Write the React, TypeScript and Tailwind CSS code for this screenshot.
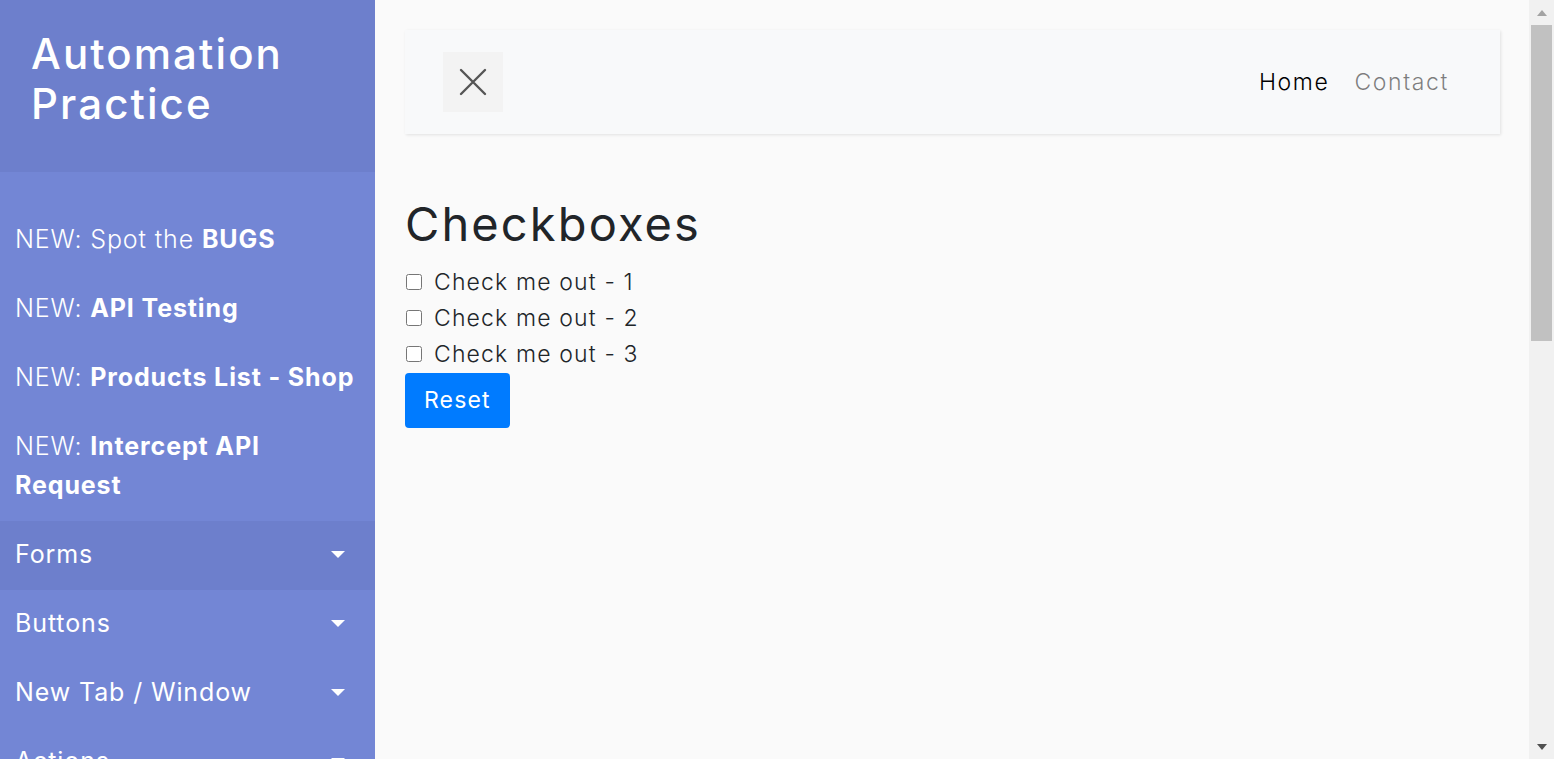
import React, { useState } from 'react';

const font = { fontFamily: 'Inter, "Noto Sans", sans-serif' };

interface NavItem {
  prefix?: string;
  label: string;
  bold?: boolean;
  dropdown?: boolean;
  active?: boolean;
}

const navItems: NavItem[] = [
  { prefix: 'NEW: Spot the ', label: 'BUGS', bold: true },
  { prefix: 'NEW: ', label: 'API Testing', bold: true },
  { prefix: 'NEW: ', label: 'Products List - Shop', bold: true },
  { prefix: 'NEW: ', label: 'Intercept API Request', bold: true },
  { label: 'Forms', dropdown: true, active: true },
  { label: 'Buttons', dropdown: true },
  { label: 'New Tab / Window', dropdown: true },
  { label: 'Actions', dropdown: true },
  { label: 'Alerts & Modals', dropdown: true },
  { label: 'Tables', dropdown: true },
  { label: 'Iframes', dropdown: true },
  { label: 'Others', dropdown: true },
];

function Sidebar() {
  return (
    <nav className="w-[375px] shrink-0 bg-[#7386d5] text-white">
      <div className="bg-[#6d7fcc] pl-[31px] pr-5 pt-[29px] pb-[43px]">
        <h3 className="text-[42px] leading-[50px] font-medium tracking-[0.05em]">Automation Practice</h3>
      </div>
      <ul className="pt-[34px] pb-5">
        {navItems.map((item) => (
          <li key={item.label}>
            <a
              href="#"
              className={`flex items-center justify-between pl-[15px] pt-[14px] pb-[16px] text-[25px] leading-[39px] tracking-[0.035em] ${
                item.dropdown ? 'pr-[30px]' : 'pr-[8px]'
              } ${item.active ? 'bg-[#6d7fcc]' : ''}`}
            >
              <span>
                {item.prefix && <span className="font-light">{item.prefix}</span>}
                <span className={item.bold ? 'font-bold' : 'font-normal'}>{item.label}</span>
              </span>
              {item.dropdown && (
                <span className="w-0 h-0 border-t-[7px] border-t-white border-x-[7px] border-x-transparent shrink-0" />
              )}
            </a>
          </li>
        ))}
      </ul>
    </nav>
  );
}

function Navbar() {
  return (
    <div className="flex items-center justify-between bg-[#f8f9fa] h-[104px] pl-[38px] pr-[51px] shadow-[1px_1px_3px_rgba(0,0,0,0.1)]">
      <button className="w-[60px] h-[60px] bg-[#f3f3f3] flex items-center justify-center">
        <svg width="28" height="28" viewBox="0 0 28 28" fill="none" stroke="#555" strokeWidth="2.4" strokeLinecap="round">
          <path d="M2 2 L26 26 M26 2 L2 26" />
        </svg>
      </button>
      <div className="flex items-center gap-[25px] text-[23px] font-light tracking-[0.07em]">
        <a href="#" className="text-black">Home</a>
        <a href="#" className="text-black/50">Contact</a>
      </div>
    </div>
  );
}

function Scrollbar() {
  return (
    <div className="fixed top-0 right-0 w-[25px] h-screen bg-[#f1f1f1] flex flex-col items-center">
      <div className="h-[25px] flex items-center justify-center shrink-0">
        <span className="w-0 h-0 border-b-[6px] border-b-[#a3a3a3] border-x-[5px] border-x-transparent" />
      </div>
      <div className="w-[21px] h-[316px] bg-[#c1c1c1] shrink-0" />
      <div className="flex-1" />
      <div className="h-[25px] flex items-center justify-center shrink-0">
        <span className="w-0 h-0 border-t-[6px] border-t-[#505050] border-x-[5px] border-x-transparent" />
      </div>
    </div>
  );
}

export default function App() {
  const [checked, setChecked] = useState([false, false, false]);

  return (
    <div className="flex min-h-[1748px] bg-[#fafafa]" style={font}>
      <Sidebar />
      <main className="flex-1 pl-[30px] pr-[54px] py-[30px]">
        <Navbar />
        <h1 className="mt-[61px] mb-[12px] text-[47px] leading-[57px] font-normal text-[#212529] tracking-[0.045em]">
          Checkboxes
        </h1>
        <div className="flex flex-col">
          {checked.map((c, i) => (
            <label key={i} className="flex items-center gap-3 text-[23px] leading-[36px] text-[#212529] font-light tracking-[0.05em]">
              <input
                type="checkbox"
                className="w-4 h-4 ml-px"
                checked={c}
                onChange={() => setChecked(checked.map((v, j) => (j === i ? !v : v)))}
              />
              Check me out - {i + 1}
            </label>
          ))}
        </div>
        <button
          onClick={() => setChecked([false, false, false])}
          className="mt-px h-[55px] px-[19px] bg-[#007bff] text-white text-[23px] rounded-[4px] tracking-[0.05em]"
        >
          Reset
        </button>
      </main>
      <Scrollbar />
    </div>
  );
}
